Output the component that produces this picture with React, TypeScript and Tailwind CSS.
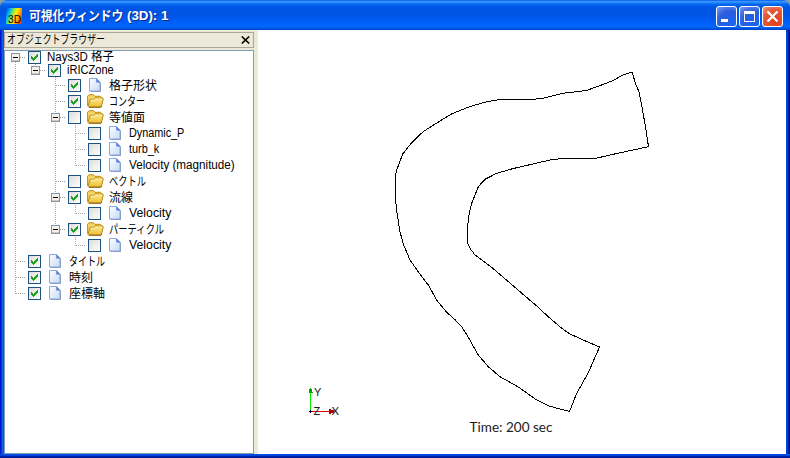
import { useLayoutEffect, useRef } from "react";
import type { ReactNode } from "react";

const UI_FONT = "font-['Liberation_Sans','Noto_Sans_CJK_JP',sans-serif]";

/** One line of text, condensed or stretched horizontally to a given width. */
function FitText({ width, className = "", children }: { width: number; className?: string; children: ReactNode }) {
  const ref = useRef<HTMLSpanElement>(null);
  useLayoutEffect(() => {
    const el = ref.current;
    if (el) el.style.transform = `scaleX(${width / el.offsetWidth})`;
  }, [width, children]);
  return (
    <span className="flex shrink-0" style={{ width }}>
      <span ref={ref} className={`inline-block shrink-0 origin-left whitespace-pre ${className}`}>
        {children}
      </span>
    </span>
  );
}

type Icon = "file" | "folder";
type Guide = "line" | "tee" | "end" | "minus" | "minusEnd" | "minusTop" | "none";
type Row = { guides: Guide[]; checked: boolean; icon?: Icon; label: string; width: number };

const rows: Row[] = [
  { guides: ["minusTop"], checked: true, label: "Nays3D 格子", width: 67 },
  { guides: ["line", "minusEnd"], checked: true, label: "iRICZone", width: 47 },
  { guides: ["line", "none", "tee"], checked: true, icon: "file", label: "格子形状", width: 48 },
  { guides: ["line", "none", "tee"], checked: true, icon: "folder", label: "コンター", width: 36 },
  { guides: ["line", "none", "minus"], checked: false, icon: "folder", label: "等値面", width: 36 },
  { guides: ["line", "none", "line", "tee"], checked: false, icon: "file", label: "Dynamic_P", width: 55 },
  { guides: ["line", "none", "line", "tee"], checked: false, icon: "file", label: "turb_k", width: 30 },
  { guides: ["line", "none", "line", "end"], checked: false, icon: "file", label: "Velocity (magnitude)", width: 106 },
  { guides: ["line", "none", "tee"], checked: false, icon: "folder", label: "ベクトル", width: 37 },
  { guides: ["line", "none", "minus"], checked: true, icon: "folder", label: "流線", width: 24 },
  { guides: ["line", "none", "line", "end"], checked: false, icon: "file", label: "Velocity", width: 42 },
  { guides: ["line", "none", "minusEnd"], checked: true, icon: "folder", label: "パーティクル", width: 55 },
  { guides: ["line", "none", "none", "end"], checked: false, icon: "file", label: "Velocity", width: 42 },
  { guides: ["tee"], checked: true, icon: "file", label: "タイトル", width: 36 },
  { guides: ["tee"], checked: true, icon: "file", label: "時刻", width: 24 },
  { guides: ["end"], checked: true, icon: "file", label: "座標軸", width: 36 },
];

function GuideCell({ kind, height }: { kind: Guide; height: number }) {
  const mid = height === 13 ? 6.5 : 8.5;
  const hasBox = kind.startsWith("minus");
  const down = kind === "line" || kind === "tee" || kind === "minus" || kind === "minusTop";
  const top = kind === "minusTop" ? mid : 0;
  return (
    <svg width="20" height={height} className="shrink-0" shapeRendering="crispEdges">
      {kind !== "none" && (
        <path d={`M10.5 ${top}V${down ? height : mid}`} stroke="#aca899" strokeDasharray="1 1" />
      )}
      {kind !== "none" && kind !== "line" && <path d={`M11 ${mid}H20`} stroke="#aca899" strokeDasharray="1 1" />}
      {hasBox && (
        <g>
          <rect x="6.5" y={mid - 4} width="8" height="8" rx="1" fill="#f3f1ea" stroke="#7b98b5" />
          <path d={`M7 ${mid + 3}H14`} stroke="#d0c8b8" />
          <path d={`M8 ${mid}H13`} stroke="#000" />
        </g>
      )}
    </svg>
  );
}

function CheckBox({ checked }: { checked: boolean }) {
  return (
    <span className="flex h-[13px] w-[13px] shrink-0 border border-[#1c5180] bg-linear-to-br from-[#dcdcd7] to-white">
      {checked && (
        <svg width="11" height="11" viewBox="0 0 11 11" shapeRendering="crispEdges">
          <path d="M2 4h1v1h1v1h1V5h1V4h1V3h1V2h1v3H8v1H7v1H6v1H5v1H4V8H3V7H2z" fill="#21a121" />
        </svg>
      )}
    </span>
  );
}

function FileIcon() {
  return (
    <svg width="12" height="14" viewBox="0 0 12 14">
      <path d="M1.5 13.5h10v-9" fill="none" stroke="#8290b5" />
      <path d="M.5.5h7l3.5 3.7v8.8H.5z" fill="url(#paper)" stroke="#8ba9df" />
      <path d="M7.5.7v3.5H11z" fill="#5c82d2" stroke="#5c82d2" strokeWidth=".6" />
    </svg>
  );
}

function FolderIcon() {
  return (
    <svg width="17" height="14" viewBox="0 0 17 14">
      <path d="M.6 11.4V2.3L2 .7h4.4l1.3 1.6h5.8l1.1 1.2v8" fill="#f5d667" stroke="#b98b12" />
      <path d="M1 12 3.2 5.2h4L8.4 4h7.2c.7 0 .8.4.6 1l-1.7 7c-.2.7-.6.9-1.2.9H2c-.8 0-1.2-.3-1-.9z" fill="url(#folder)" stroke="#b98b12" />
      <path d="M4.2 6.1h3.5L8.9 5h6.2" fill="none" stroke="#fff6bd" strokeWidth=".8" />
      <path d="M2 13.4h11.8l1-1.4" fill="none" stroke="#73540b" strokeWidth=".8" />
    </svg>
  );
}

function TreeRow({ row, height }: { row: Row; height: number }) {
  const compact = !row.icon || /^[\x20-\x7e]+$/.test(row.label);
  return (
    <div className={`flex items-center ${height === 13 ? "h-[13px]" : "h-4"}`}>
      {row.guides.map((g, i) => (
        <GuideCell key={i} kind={g} height={height} />
      ))}
      <span className="ml-[3px] flex">
        <CheckBox checked={row.checked} />
      </span>
      {row.icon && (
        <span className={`flex w-[17px] shrink-0 ${row.icon === "file" ? "ml-[5px] mr-px justify-center" : "ml-1.5"}`}>
          {row.icon === "file" ? <FileIcon /> : <FolderIcon />}
        </span>
      )}
      <span className={`${row.icon ? "ml-[5px]" : "ml-1.5"} ${compact ? "pb-px" : "pt-px"}`}>
        <FitText width={row.width} className={`text-[12px] ${row.icon ? "leading-[14px]" : "leading-[12px]"}`}>
          {row.label}
        </FitText>
      </span>
    </div>
  );
}

function CaptionButton({ close = false, children }: { close?: boolean; children: ReactNode }) {
  return (
    <button
      className={`flex h-[21px] w-[21px] items-center justify-center rounded-[3px] border border-white ${
        close
          ? "bg-[radial-gradient(circle_at_65%_75%,#e0401a,#e35a38_60%,#ec9a84)]"
          : "bg-[radial-gradient(circle_at_70%_80%,#1c63f2,#2b5edc_55%,#7c9cf0)]"
      }`}
    >
      <svg width="19" height="19" viewBox="0 0 19 19" className="shrink-0">
        {children}
      </svg>
    </button>
  );
}

function TitleBar() {
  return (
    <header className="flex h-[30px] items-center bg-[linear-gradient(to_bottom,#0058e6_0%,#3a93ff_5%,#298dff_8%,#0468ee_14%,#0057e5_22%,#0054e3_48%,#005cf5_70%,#0066ff_86%,#005ff0_92%,#0041c4_100%)] pt-0.5 pl-1.5">
      <svg width="16" height="16" viewBox="0 0 16 16">
        <rect width="16" height="16" fill="url(#rainbow)" />
        <text x="2" y="15" fontSize="11" textLength="13" lengthAdjust="spacingAndGlyphs" fontFamily="Liberation Sans, sans-serif" fill="#000">
          3D
        </text>
      </svg>
      <div className="ml-[7px] flex flex-1 text-white [text-shadow:1px_1px_0_#0a2f8c]">
        <FitText width={98} className="text-[13px] leading-4 font-bold">
          {"可視化ウィンドウ "}
        </FitText>
        <FitText width={41} className="text-[12px] leading-4 font-bold">
          (3D): 1
        </FitText>
      </div>
      <div className="mr-[7px] flex gap-0.5">
        <CaptionButton>
          <path d="M4 12h7v3H4z" fill="#fff" />
        </CaptionButton>
        <CaptionButton>
          <path d="M4 4h11v11H4zM5 7v7h9V7z" fill="#fff" fillRule="evenodd" />
        </CaptionButton>
        <CaptionButton close>
          <path d="m4.5 4.5 10 10m0-10-10 10" stroke="#fff" strokeWidth="2.2" />
        </CaptionButton>
      </div>
    </header>
  );
}

const CHANNEL =
  "632,72 623,75 613,80.5 603,84.5 587,90.3 577,91.7 567,92.7 560,94 543,98.3 533,99.3 500,99.6 487,101.7 470,106.5 452,113.7 440,121 423.3,131.5 411.7,142.7 402.7,154 397.3,168.3 395.5,175 395.5,200 397.3,215 400,231.7 403.3,244 410,260 420,274.3 428.3,285 437.3,301 446.7,312.3 455,319.7 461.7,326.7 468.3,337.3 478.3,355 488.3,366.7 500,376.7 518.3,387 536.7,400 550,406.3 569.5,411.5 576.7,393.3 588.3,372.7 599.5,347 586.7,341.5 570,334 561.7,328.3 548.3,316.7 536.7,306 520,291.7 491.7,267.3 475,255 470,248.3 467.6,242.7 467.6,226.7 469.3,213.3 471.7,203.3 478.3,186.7 485,179.3 496.7,173.3 513.3,168.5 533.3,163.9 550,160 561.7,158.5 595,158.4 603,156.7 615,153.9 648.5,146.7 645.7,128.3 642,106.7 639,91.7 636,85";

function Viewport() {
  return (
    <main className="h-full flex-1 bg-white">
      <svg width="528" height="424" viewBox="258 30 528 424" className="block">
        <polygon points={CHANNEL} fill="none" stroke="#000" shapeRendering="crispEdges" />
        <g shapeRendering="crispEdges">
          <path d="M310 392h1v19h-1z" fill="#00f000" />
          <path d="M310 388h1v1h1v3h1v1h-4v-1h0v-3h1z" fill="#00a500" />
          <path d="M312 411h18v1h-18z" fill="#e00000" />
          <path d="M329 409h2v1h3v3h-3v1h-2z" fill="#b00000" />
          <path d="M310 410h1v1h1v1h-1v1h-1v-1h-1v-1h1z" fill="#000050" />
        </g>
        <g fontFamily="Lato, Liberation Sans, sans-serif" fill="#222">
          <text x="314.3" y="396" fontSize="11">Y</text>
          <text x="313.5" y="415" fontSize="11">Z</text>
          <text x="331.7" y="415" fontSize="11">X</text>
          <text x="469.5" y="432" fontSize="12.5" textLength="83" lengthAdjust="spacingAndGlyphs">
            Time: 200 sec
          </text>
        </g>
      </svg>
    </main>
  );
}

export default function App() {
  return (
    <div className="bg-[#8e9aa0]">
      <div className={`flex h-[458px] w-[790px] flex-col overflow-hidden rounded-t-[7px] text-black ${UI_FONT}`}>
        <svg width="0" height="0" className="absolute">
          <defs>
            <linearGradient id="paper" x1="0" y1="0" x2="1" y2="1">
              <stop stopColor="#fff" />
              <stop offset="1" stopColor="#c4dafa" />
            </linearGradient>
            <linearGradient id="folder" x1="0" y1="0" x2="0" y2="1">
              <stop stopColor="#ffeb96" />
              <stop offset="1" stopColor="#edbd32" />
            </linearGradient>
            <linearGradient id="rainbow" x1="0" y1="0.2" x2="1" y2="0.6">
              <stop stopColor="#0055ee" />
              <stop offset=".22" stopColor="#00c8e0" />
              <stop offset=".42" stopColor="#9be53c" />
              <stop offset=".58" stopColor="#ffee00" />
              <stop offset=".8" stopColor="#ff9800" />
              <stop offset="1" stopColor="#f04000" />
            </linearGradient>
          </defs>
        </svg>
        <TitleBar />
        <div className="flex h-[424px] bg-[linear-gradient(to_right,#0019cf_0_1px,#0831d9_1px_2px,#1660ea_2px_3px,#0855dd_3px_50%,#0046e0_50%_787px,#0034d8_787px_788px,#001ea0_788px_789px,#00138c_789px)] px-1">
          <aside className="flex w-[254px] shrink-0 flex-col bg-[#ece9d8] pt-0.5 pr-1">
            <div className="mb-0.5 flex h-4 items-center justify-between border border-[#aca899] pr-[3px] pl-0.5">
              <FitText width={98} className="text-[12px] leading-[14px]">
                オブジェクトブラウザー
              </FitText>
              <svg width="9" height="8" viewBox="0 0 9 8">
                <path d="m.8.5 7.4 7m0-7-7.4 7" stroke="#000" strokeWidth="1.6" />
              </svg>
            </div>
            <div className="flex-1 border border-[#7f9db9] bg-white">
              {rows.map((row, i) => (
                <TreeRow key={i} row={row} height={i < 2 ? 13 : 16} />
              ))}
            </div>
          </aside>
          <Viewport />
        </div>
        <div className="h-1 bg-[linear-gradient(to_bottom,#0050e6_0_1px,#0040dc_1px_2px,#0024a8_2px_3px,#001590_3px)]" />
      </div>
    </div>
  );
}
